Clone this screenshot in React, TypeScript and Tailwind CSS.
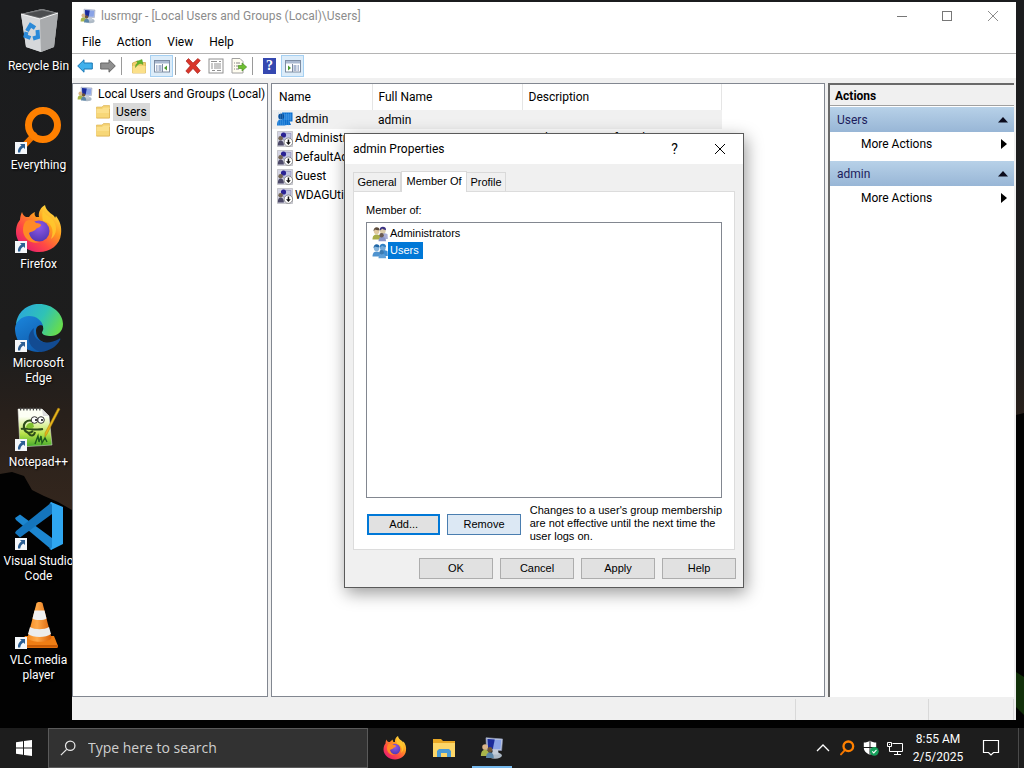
import type { ReactNode } from "react";

type IconProps = { className?: string };

function ComputerUsersIcon({ className }: IconProps) {
  return (
    <svg viewBox="0 0 16 16" className={className} aria-hidden="true">
      <path d="M4 1.2 L15 2 L14.4 9.6 L4.4 9.4Z" fill="#c9d2e4" stroke="#8c97b5" strokeWidth="0.5" />
      <path d="M5 2 L14.2 2.7 L13.7 8.8 L5.3 8.6Z" fill="#8aa3e6" />
      <path d="M5 2 L9.8 2.4 L8.6 8.7 L5.3 8.6Z" fill="#1a2a9a" />
      <ellipse cx="10" cy="13" rx="4.6" ry="2.2" fill="#aebac6" />
      <path d="M8.5 9.4h3.5l.5 3h-4.5z" fill="#c3ccd8" />
      <circle cx="3.4" cy="7.4" r="1.9" fill="#d9b489" />
      <path d="M0.6 13.4c0-2.8 1-4.2 2.8-4.2s2.8 1.4 2.8 4.2z" fill="#a9b64a" />
      <circle cx="6.6" cy="9" r="1.7" fill="#705536" />
      <path d="M4 14.6c0-2.4 1-3.8 2.6-3.8s2.6 1.4 2.6 3.8z" fill="#5b86a8" />
    </svg>
  );
}

function UserIcon({ className, disabled }: IconProps & { disabled?: boolean }) {
  return (
    <svg viewBox="0 0 16 16" className={className} aria-hidden="true">
      {disabled ? (
        <>
          <rect x="0.5" y="0.5" width="15" height="15" fill="#d4d4e4" stroke="#777" strokeWidth="0.6" strokeDasharray="1 1" />
          <path d="M5.5 2 L14 2.5 L13.5 9 L6 9Z" fill="#c0c4e2" stroke="#8385b0" strokeWidth="0.6" />
          <circle cx="6.5" cy="4" r="2.6" fill="#2a2294" />
          <circle cx="3.6" cy="7.2" r="2.3" fill="#756653" />
          <path d="M0.8 14.5c0-3.4 1-5 2.9-5s3.2 1.6 3.2 5z" fill="#4c4968" />
          <circle cx="11.4" cy="11.2" r="4.2" fill="#fff" stroke="#555" strokeWidth="0.6" />
          <path d="M10.7 8.4h1.5v2.8h1.6l-2.4 2.8L9 11.2h1.7z" fill="#111" />
        </>
      ) : (
        <>
          <path d="M5 0.500h10.500v9H12.500l1.500 3.500H7L5 10z" fill="#0b6fcf" />
          <path d="M6.500 2h8v6h-8z" fill="#2583dc" />
          <circle cx="4.200" cy="4.500" r="3" fill="#0a4f9b" />
          <path d="M0 13.500c0-4.300 1.200-6 4-6s4.500 1.800 4.500 6z" fill="#1979d4" />
          <path d="M1 1h14M1 3h14M1 5h14M1 7h14M1 9h14M1 11h12M1 13h11" stroke="#7fbdf2" strokeWidth="0.5" strokeDasharray="1 1" />
        </>
      )}
    </svg>
  );
}

function GroupIcon({ className, selected }: IconProps & { selected?: boolean }) {
  return (
    <svg viewBox="0 0 16 16" className={className} aria-hidden="true">
      <path d="M8 8c1-1.500 6-1.500 7.500.5l.3 4.500H9z" fill={selected ? "#3f8ed2" : "#a9aed6"} />
      <circle cx="10.800" cy="4.800" r="2.900" fill={selected ? "#74a9d8" : "#dccba9"} />
      <path d="M7.600 4.600c0-3 1.600-3.800 3.300-3.800s3.300 1 3.100 3.400c-2-.4-3-1-4-1.600-.4 1-1.300 1.700-2.400 2z" fill={selected ? "#2f7fc4" : "#3a3182"} />
      <circle cx="4.600" cy="5.400" r="2.700" fill={selected ? "#86b4dc" : "#e0c9a0"} />
      <path d="M1.500 5.200c0-2.600 1.500-3.900 3.100-3.900 1.900 0 3 1.200 2.900 3-2.200 0-3.800-.3-4.600-.8-.3.800-.8 1.300-1.400 1.700z" fill={selected ? "#2166a5" : "#5b4a3a"} />
      <path d="M0.500 13.500c0-3.600 1.600-5 4.100-5s4.300 1.400 4.300 5z" fill={selected ? "#4f93cf" : "#a9ad48"} />
      <path d="M6.500 15.200c0-3.200 1.500-4.500 3.600-4.500s4 1.300 4 4.500z" fill={selected ? "#5d9fd8" : "#8a94c8"} />
      <circle cx="9.600" cy="9.300" r="2.200" fill={selected ? "#3c7bb2" : "#6b5a52"} />
    </svg>
  );
}

function FolderIcon({ className }: IconProps) {
  return (
    <svg viewBox="0 0 16 16" className={className} aria-hidden="true">
      <path d="M1.500 3h5.500l1.500-1.500h6v12.500h-13z" fill="#f3d071" stroke="#dcb24d" strokeWidth="0.6" />
      <path d="M1.500 5h5.500l1.500-1.500h6V14h-13z" fill="#fbe08c" />
      <path d="M1.500 9h13v5h-13z" fill="#f5d36f" opacity="0.7" />
      <path d="M1.500 14h13V5" fill="none" stroke="#d8aa44" strokeWidth="0.6" />
    </svg>
  );
}

function RecycleBinIcon() {
  return (
    <svg viewBox="0 0 48 48" className="size-12" aria-hidden="true">
      <path d="M6 7 L27 2 L43 6 L39 40 L26 45 L11 40Z" fill="#c9cbcd" />
      <path d="M6 7 L27 2 L43 6 L25 12Z" fill="#77797b" />
      <path d="M10 7 L27 3.500 L39 6 L25 10.500Z" fill="#4b4d4f" />
      <path d="M6 7 L25 12 L26 45 L11 40Z" fill="#d6d8da" />
      <path d="M25 12 L43 6 L39 40 L26 45Z" fill="#a9abad" />
      <path d="M6 7 L25 12 L43 6" fill="none" stroke="#f2f2f2" strokeWidth="1" />
      <g fill="none" stroke="#2b8ad8" strokeWidth="4">
        <path d="M12 24l3.500-6 4.500 3" />
        <path d="M22.500 23l.5 7-5 1.500" />
        <path d="M15.500 31l-5-2 1-4" />
      </g>
    </svg>
  );
}

function EverythingIcon({ className }: IconProps) {
  return (
    <svg viewBox="0 0 48 48" className={className} aria-hidden="true">
      <path d="M19 29 L6 43" stroke="#f07400" strokeWidth="6" strokeLinecap="round" />
      <circle cx="28" cy="19" r="14.500" fill="none" stroke="#ff8000" strokeWidth="7" />
    </svg>
  );
}

function FirefoxIcon({ className }: IconProps) {
  return (
    <svg viewBox="0 0 48 48" className={className} aria-hidden="true">
      <defs>
        <linearGradient id="fxBody" x1="0.850" y1="0.100" x2="0.200" y2="0.900">
          <stop offset="0" stopColor="#ffe141" />
          <stop offset="0.350" stopColor="#ff9a1f" />
          <stop offset="0.700" stopColor="#ff4a44" />
          <stop offset="1" stopColor="#e9226a" />
        </linearGradient>
        <radialGradient id="fxGlobe" cx="0.500" cy="0.300" r="0.800">
          <stop offset="0" stopColor="#9059e8" />
          <stop offset="1" stopColor="#4c34ad" />
        </radialGradient>
      </defs>
      <path
        d="M30 0c1 5 4 7 8 10 1 1 2 2 2 3l1-2c4 5 6 11 5 18-1 11-11 18-22 18S1 39 1 27c0-6 2-10 4-12 0-3 1-6 2-8 1 3 2 4 4 5l3 0c2-3 4-4 6-5-1 2 0 4 1 5l3 0c-1-5 2-10 6-12z"
        fill="url(#fxBody)"
      />
      <circle cx="24" cy="26" r="10.500" fill="url(#fxGlobe)" />
      <path d="M11 16c4-2 8-1 10 2 3 0 5 1 5 2 0 2-4 3-5 4-2 3-5 2-7 4 1 5 5 9 11 9-9 3-17-4-17-12 0-4 1-7 3-9z" fill="#ff8a25" />
      <path d="M28 16c8 1 12 9 8 18 6-4 7-14 1-20-3-3-8-5-9-9-1 4-1 8 0 11z" fill="#ffc92e" opacity="0.850" />
    </svg>
  );
}

function EdgeIcon() {
  return (
    <svg viewBox="0 0 48 48" className="size-12" aria-hidden="true">
      <defs>
        <linearGradient id="edgeTop" x1="0" y1="0.200" x2="1" y2="0.600">
          <stop offset="0" stopColor="#2aa6de" />
          <stop offset="0.550" stopColor="#2fc2b6" />
          <stop offset="1" stopColor="#66dc4e" />
        </linearGradient>
        <linearGradient id="edgeLeft" x1="0" y1="0" x2="0.600" y2="1">
          <stop offset="0" stopColor="#1b86dc" />
          <stop offset="1" stopColor="#0f5aab" />
        </linearGradient>
      </defs>
      <path d="M1 21C2 8 12 0 24 0c14 0 24 10 24 20 0 8-6 12-12 12-5 0-9-1-9-3s2-3 1-6c-1-5-6-9-13-9C8 14 3 17 1 21z" fill="url(#edgeTop)" />
      <path d="M0 24c1-7 7-12 14-12 8 0 13 5 14 10-3-2-7 0-7 5 0 8 6 12 15 13-4 5-9 8-13 8C8 47 0 37 0 24z" fill="url(#edgeLeft)" />
      <path d="M19 24c-3 12 11 19 25 11 1-1 2 0 1 1-3 6-10 11-19 12-12-3-17-16-7-24z" fill="#124b92" />
      <path d="M28 22c0 3-2 5-1 7 1 3 8 5 14 3-4 5-16 5-18-4-1-4 2-8 5-6z" fill="#1a1b1d" />
    </svg>
  );
}

function NotepadIcon() {
  return (
    <svg viewBox="0 0 48 48" className="size-12" aria-hidden="true">
      <defs>
        <linearGradient id="nppPage" x1="0" y1="0" x2="0" y2="1">
          <stop offset="0.200" stopColor="#fdfff4" />
          <stop offset="0.650" stopColor="#b9e34a" />
          <stop offset="1" stopColor="#3fa82a" />
        </linearGradient>
      </defs>
      <path d="M3 6h24l7 7 3 29-32 2z" fill="url(#nppPage)" stroke="#e6e6e6" strokeWidth="0.500" />
      <path d="M27 6l1 7h6z" fill="#dcdcdc" />
      <path d="M5 6h22" stroke="#444" strokeWidth="3" strokeDasharray="1.200 2" />
      <path d="M18 18c-7-2-10 3-9 7 1 5 6 6 9 3M6 26c5-2 12 2 22 0M13 30c3 4 6 3 7-1" fill="none" stroke="#2d4d1a" strokeWidth="2" />
      <path d="M11 24c1-4 4-5 7-4l1 4c-3 2-6 2-8 0z" fill="#7fc12f" />
      <circle cx="19.500" cy="17" r="3.300" fill="#fff" stroke="#333" />
      <circle cx="26" cy="17" r="3.300" fill="#fff" stroke="#333" />
      <circle cx="21" cy="17" r="1" />
      <circle cx="27" cy="17" r="1" />
      <path d="M20 41l3-8 1 6 2-6 1 7 3-5 2 4" fill="none" stroke="#1d5b1d" strokeWidth="1.400" />
      <path d="M45 6l-13 25-2 3 0-4L43 5z" fill="#e5b51c" stroke="#a9780f" strokeWidth="0.500" />
    </svg>
  );
}

function VsCodeIcon() {
  return (
    <svg viewBox="0 0 48 48" className="size-12" aria-hidden="true">
      <path d="M0 16l5-3.500L37 36v12L1 18z" fill="#1c86d0" />
      <path d="M0 31l5 4.500L37 12V0L1 29z" fill="#1475bd" />
      <path d="M36 0l12 5v37l-12 6-2-2c2 1 3 0 3-2V4c0-2-1-3-3-2z" fill="#2fa6f0" />
    </svg>
  );
}

function VlcIcon() {
  return (
    <svg viewBox="0 0 48 48" className="size-12" aria-hidden="true">
      <defs>
        <linearGradient id="vlcCone" x1="0" x2="1">
          <stop offset="0" stopColor="#f58a1f" />
          <stop offset="0.400" stopColor="#ffa94a" />
          <stop offset="1" stopColor="#d95f06" />
        </linearGradient>
      </defs>
      <path d="M10 35h29l4 10-1 2H5l0-3z" fill="#ee7d14" />
      <path d="M5 44h38v2.500H5z" fill="#c95c05" />
      <path d="M21.500 2c1-1.500 5-1.500 6 0l9 35c-3 5-21 5-24 0z" fill="url(#vlcCone)" />
      <path d="M19.500 9.500h10l2 8c-3 2-11 2-14 0z" fill="#f1f1f1" />
      <path d="M15 26c5 3 14 3 19 0l2 7c-5 4-18 4-23 0z" fill="#ececec" />
    </svg>
  );
}

function ShortcutArrow() {
  return (
    <svg viewBox="0 0 12 12" className="absolute bottom-0 left-0 size-3" aria-hidden="true">
      <path d="M0 0h12v12H0z" fill="#f4f7fa" />
      <path d="M5 2h5v5L8.300 5.400C6.500 6.500 5.500 8 5.200 10.500H3C2.600 7.600 4 5 6.500 3.600z" fill="#2c5f94" />
    </svg>
  );
}

function ArrowIcon({ flip, light, dark }: { flip?: boolean; light: string; dark: string }) {
  return (
    <svg viewBox="0 0 16 16" className={flip ? "size-4 -scale-x-100" : "size-4"} aria-hidden="true">
      <path d="M0.700 8 L7 1.800V5h8.300v6H7v3.200z" fill={light} stroke={dark} strokeWidth="1" />
    </svg>
  );
}

function UpFolderIcon() {
  return (
    <svg viewBox="0 0 16 16" className="size-4" aria-hidden="true">
      <path d="M1.500 5l5-2 2 1.500h6V15h-13z" fill="#f1d06b" stroke="#c9a23e" strokeWidth="0.700" />
      <path d="M1.500 8h13V15h-13z" fill="#fbe08a" />
      <path d="M4.500 9.500c0-3 1-4 2.500-4.500L5.500 3.500 11 1.500l1 5-2-1c-2 0-4 1.500-5.500 4z" fill="#5fb52c" stroke="#3f8a17" strokeWidth="0.400" />
    </svg>
  );
}

function PaneIcon({ right }: { right?: boolean }) {
  return (
    <svg viewBox="0 0 16 16" className={right ? "size-4 -scale-x-100" : "size-4"} aria-hidden="true">
      <rect x="0.500" y="2.500" width="15" height="11.500" fill="#fff" stroke="#7c8ba1" />
      <path d="M1 3h14v2.500H1z" fill="#aab9d0" />
      <path d="M8.500 6v8" stroke="#7c8ba1" />
      <path d="M2 8h1.500M4.500 8h3M2 10h1.500M4.500 10h3M2 12h1.500M4.500 12h3" stroke="#5b74a4" />
      <path d="M13 7.500v5L10 10z" fill="#4b9b2f" />
    </svg>
  );
}

function DeleteIcon() {
  return (
    <svg viewBox="0 0 16 16" className="size-4" aria-hidden="true">
      <path d="M1 3l2.500-2.500L8 5l4.800-4.500L15.300 2.500 10.800 7.500l4.500 5.300-2.800 2.700L8 10.500l-4.700 5L.8 13 5.300 7.800z" fill="#d9352a" stroke="#9e1b14" strokeWidth="0.600" />
    </svg>
  );
}

function PropertiesIcon() {
  return (
    <svg viewBox="0 0 16 16" className="size-4" aria-hidden="true">
      <rect x="1" y="1" width="14" height="14" fill="#fff" stroke="#909090" />
      <path d="M3 3.500h6M3 6h2M6 6h7M3 8h2M6 8h7M3 10h2M6 10h7M4 12.500h3M9 12.500h4M11 3.500h2" stroke="#909090" />
    </svg>
  );
}

function ExportIcon() {
  return (
    <svg viewBox="0 0 16 16" className="size-4" aria-hidden="true">
      <path d="M1 0.500h8L12 3.500V15H1z" fill="#fffdf0" stroke="#a0a0a0" />
      <path d="M3 5h1M5 5h4M3 8h1M5 8h3M3 11h1M5 11h3" stroke="#888" />
      <path d="M7.500 7.500h3.500V5L15.700 9 11 13v-2.500H7.500z" fill="#6fbf33" stroke="#3f8a17" strokeWidth="0.600" />
    </svg>
  );
}

function HelpIcon() {
  return (
    <span className="flex h-4 w-[13px] items-center justify-center bg-[#3548b0] font-['Liberation_Serif',serif] text-sm font-bold text-white">
      ?
    </span>
  );
}

function CloseGlyph({ className }: IconProps) {
  return (
    <svg viewBox="0 0 12 12" className={className} fill="none" stroke="currentColor" aria-hidden="true">
      <path d="M1 1l10 10M11 1L1 11" />
    </svg>
  );
}

const SHORTCUTS: { label: string; icon: ReactNode; link?: boolean }[] = [
  { label: "Recycle Bin", icon: <RecycleBinIcon /> },
  { label: "Everything", icon: <EverythingIcon className="size-12" />, link: true },
  { label: "Firefox", icon: <FirefoxIcon className="size-12" />, link: true },
  { label: "Microsoft\nEdge", icon: <EdgeIcon />, link: true },
  { label: "Notepad++", icon: <NotepadIcon />, link: true },
  { label: "Visual Studio\nCode", icon: <VsCodeIcon />, link: true },
  { label: "VLC media\nplayer", icon: <VlcIcon />, link: true },
];

const USERS = [
  { name: "admin", fullName: "admin", description: "", disabled: false },
  { name: "Administrator", fullName: "", description: "Built-in account for administering", disabled: true },
  { name: "DefaultAccount", fullName: "", description: "", disabled: true },
  { name: "Guest", fullName: "", description: "", disabled: true },
  { name: "WDAGUtility", fullName: "", description: "", disabled: true },
];

function Wallpaper() {
  return (
    <svg viewBox="0 0 1024 768" preserveAspectRatio="none" className="absolute inset-0 size-full" aria-hidden="true">
      <defs>
        <linearGradient id="sky" x1="0" y1="0" x2="0" y2="1">
          <stop offset="0" stopColor="#1b1c1e" />
          <stop offset="0.450" stopColor="#1d1d1d" />
          <stop offset="0.540" stopColor="#28201b" />
          <stop offset="0.660" stopColor="#33261d" />
        </linearGradient>
      </defs>
      <path d="M0 0h1024v768H0z" fill="url(#sky)" />
      <path d="M0 474l12-2 12 4 8 14 12 6 14 6 14 8L900 430l116-15 8-2v355H0z" fill="#020202" />
      <path d="M1016 672l8 5v38l-8-8z" fill="#12300a" />
    </svg>
  );
}

function DesktopIcons() {
  return (
    <nav className="w-[72px] shrink-0 overflow-hidden pt-[7px]">
      {SHORTCUTS.map((item) => (
        <button key={item.label} type="button" className="flex h-[99px] w-[77px] flex-col items-center text-white">
          <span className="relative mb-1 block size-12">
            {item.icon}
            {item.link && <ShortcutArrow />}
          </span>
          <span className="text-xs leading-[15px] whitespace-pre [text-shadow:1px_1px_2px_#000]">{item.label}</span>
        </button>
      ))}
    </nav>
  );
}

function ToolButton({ label, active, children }: { label: string; active?: boolean; children: ReactNode }) {
  return (
    <button
      type="button"
      aria-label={label}
      className={`flex h-[22px] w-[23px] items-center justify-center border ${
        active ? "border-[#a5d0f2] bg-[#dcecf9]" : "border-transparent"
      }`}
    >
      {children}
    </button>
  );
}

function ToolSeparator() {
  return <span className="mr-[5px] ml-0.5 h-[18px] w-px bg-[#9a9a9a]" />;
}

function Toolbar() {
  return (
    <div className="flex h-[24px] items-center bg-white pl-px">
      <ToolButton label="Back">
        <ArrowIcon light="#3fb0ec" dark="#1b78b5" />
      </ToolButton>
      <ToolButton label="Forward">
        <ArrowIcon flip light="#8f8f8f" dark="#666666" />
      </ToolButton>
      <ToolSeparator />
      <ToolButton label="Up one level">
        <UpFolderIcon />
      </ToolButton>
      <ToolButton label="Show console tree" active>
        <PaneIcon />
      </ToolButton>
      <ToolSeparator />
      <ToolButton label="Delete">
        <DeleteIcon />
      </ToolButton>
      <ToolButton label="Properties">
        <PropertiesIcon />
      </ToolButton>
      <ToolButton label="Export list">
        <ExportIcon />
      </ToolButton>
      <ToolSeparator />
      <ToolButton label="Help">
        <HelpIcon />
      </ToolButton>
      <ToolButton label="Show action pane" active>
        <PaneIcon right />
      </ToolButton>
    </div>
  );
}

function ConsoleTree() {
  return (
    <div className="w-[196px] shrink-0 border border-[#828790] bg-white pt-px leading-[18px] whitespace-nowrap">
      <div className="flex h-[18px] items-center gap-[5px] pl-1">
        <ComputerUsersIcon className="size-4 shrink-0" />
        <span>Local Users and Groups (Local)</span>
      </div>
      <ul className="pl-[22px]">
        <li className="flex h-[18px] items-center gap-0.5">
          <FolderIcon className="size-4" />
          <button type="button" className="bg-[#d9d9d9] px-[3px]">Users</button>
        </li>
        <li className="flex h-[18px] items-center gap-0.5">
          <FolderIcon className="size-4" />
          <button type="button" className="px-[3px]">Groups</button>
        </li>
      </ul>
    </div>
  );
}

function UserTable() {
  return (
    <div className="min-w-0 flex-1 border border-[#828790] bg-white">
      <table className="w-[450px] table-fixed border-collapse text-left">
        <thead>
          <tr className="h-[26px]">
            <th className="w-[100px] border-r border-[#e5e5e5] pl-[7px] font-normal">Name</th>
            <th className="w-[150px] border-r border-[#e5e5e5] pl-1.5 font-normal">Full Name</th>
            <th className="border-r border-[#e5e5e5] pl-1.5 font-normal">Description</th>
          </tr>
        </thead>
        <tbody>
          {USERS.map((user) => (
            <tr key={user.name} className={user.disabled ? "h-[19px]" : "h-[19px] bg-[#f0f0f0]"}>
              <td className="pl-[5px]">
                <span className="flex items-center gap-0.5 leading-[19px]">
                  <UserIcon className="size-4 shrink-0" disabled={user.disabled} />
                  {user.name}
                </span>
              </td>
              <td className="pl-1.5">{user.fullName}</td>
              <td className="truncate pl-1.5 leading-[19px]">{user.description}</td>
            </tr>
          ))}
        </tbody>
      </table>
    </div>
  );
}

function ActionGroup({ title }: { title: string }) {
  return (
    <section className="h-[54px]">
      <button
        type="button"
        className="flex h-[25px] w-full items-center justify-between bg-linear-to-b from-[#b7d1e8] to-[#98b6d6] pr-1.5 pl-[7px] text-[#1c1c5c]"
      >
        {title}
        <svg viewBox="0 0 10 6" className="h-1.5 w-2.5" aria-hidden="true">
          <path d="M0 5.500L5 0l5 5.500z" fill="#0b0b1c" />
        </svg>
      </button>
      <button type="button" className="flex h-6 w-full items-center justify-between pr-[7px] pl-[31px]">
        More Actions
        <svg viewBox="0 0 6 10" className="h-2.5 w-1.5" aria-hidden="true">
          <path d="M0 0l6 5-6 5z" fill="#000" />
        </svg>
      </button>
    </section>
  );
}

function ActionsPane() {
  return (
    <aside className="mr-0.5 w-[186px] shrink-0 border-t-2 border-l-2 border-[#696969] bg-white">
      <h2 className="mb-px h-[21px] border-b border-[#a0a0a0] bg-[#f0f0f0] pl-[5px] leading-[22px] font-bold">Actions</h2>
      <ActionGroup title="Users" />
      <ActionGroup title="admin" />
    </aside>
  );
}

function DialogButton({ children }: { children: ReactNode }) {
  return (
    <button type="button" className="h-[21px] w-[74px] border border-[#adadad] bg-[#e1e1e1]">
      {children}
    </button>
  );
}

function PropertiesDialog() {
  return (
    <div
      role="dialog"
      aria-label="admin Properties"
      className="absolute top-[133px] left-[344px] w-[400px] border border-[#5a5a5a] bg-[#f0f0f0] pb-2 font-['Liberation_Sans',Arial,sans-serif] text-[11px] leading-[13px] shadow-[2px_5px_16px_rgba(0,0,0,0.4)]"
    >
      <div className="flex h-[30px] items-center bg-white pl-2 font-[Roboto,'Open_Sans',sans-serif] text-xs">
        <span className="flex-1">admin Properties</span>
        <button type="button" aria-label="Help" className="w-[45px] text-sm">?</button>
        <button type="button" aria-label="Close" className="flex h-full w-[46px] items-center justify-center">
          <CloseGlyph className="size-3" />
        </button>
      </div>
      <div className="px-2 pt-[7px]">
        <div role="tablist" className="flex items-end">
          <button type="button" role="tab" className="h-[19px] w-12 border border-b-0 border-[#d9d9d9]">General</button>
          <button type="button" role="tab" aria-selected="true" className="-mb-px h-[21px] w-[66px] border border-b-0 border-[#d9d9d9] bg-white pb-0.5">
            Member Of
          </button>
          <button type="button" role="tab" className="h-[19px] w-[39px] border border-b-0 border-l-0 border-[#d9d9d9]">Profile</button>
        </div>
        <div role="tabpanel" className="border border-[#dcdcdc] bg-white px-3 pt-3 pb-1.5">
          <p id="member-of" className="mb-[5px]">Member of:</p>
          <ul role="listbox" aria-labelledby="member-of" className="h-[276px] border border-[#828790] pt-0.5 pl-[5px]">
            <li role="option" aria-selected="false" className="flex h-[17px] items-center">
              <GroupIcon className="size-4" />
              <span className="px-0.5">Administrators</span>
            </li>
            <li role="option" aria-selected="true" className="flex h-[17px] items-center">
              <GroupIcon className="size-4" selected />
              <span className="bg-[#0078d7] pr-1 pl-0.5 leading-[17px] text-white">Users</span>
            </li>
          </ul>
          <div className="flex pt-1.5">
            <button type="button" className="mt-2.5 mr-[7px] ml-px h-[21px] w-[74px] border-2 border-[#0078d7] bg-[#e1e1e1]">
              Add...
            </button>
            <button type="button" className="mt-2.5 mr-[9px] h-[21px] w-[74px] border border-[#4a7eb0] bg-[#dce8f4]">
              Remove
            </button>
            <p className="flex-1 whitespace-nowrap">
              Changes to a user's group membership
              <br />
              are not effective until the next time the
              <br />
              user logs on.
            </p>
          </div>
        </div>
      </div>
      <div className="flex justify-end gap-[7px] pt-2 pr-[7px]">
        <DialogButton>OK</DialogButton>
        <DialogButton>Cancel</DialogButton>
        <DialogButton>Apply</DialogButton>
        <DialogButton>Help</DialogButton>
      </div>
    </div>
  );
}

function ConsoleWindow() {
  return (
    <main className="mt-0.5 mr-2 mb-2 flex min-w-0 flex-1 flex-col bg-[#f0f0f0] text-xs">
      <header className="flex h-7 items-center bg-white pl-2 text-[#8c8c8c]">
        <ComputerUsersIcon className="mr-[5px] size-4" />
        <h1 className="flex-1">lusrmgr - [Local Users and Groups (Local)\Users]</h1>
        <button type="button" aria-label="Minimize" className="flex h-full w-[45px] items-center justify-center">
          <span className="h-px w-2.5 bg-[#777]" />
        </button>
        <button type="button" aria-label="Maximize" className="flex h-full w-[46px] items-center justify-center">
          <span className="size-2.5 border border-[#777]" />
        </button>
        <button type="button" aria-label="Close" className="flex h-full w-[46px] items-center justify-center">
          <CloseGlyph className="size-3" />
        </button>
      </header>
      <div className="flex h-6 items-center gap-4 border-b border-[#b4b4b4] bg-white pl-2.5">
        <button type="button">File</button>
        <button type="button">Action</button>
        <button type="button">View</button>
        <button type="button">Help</button>
      </div>
      <Toolbar />
      <div className="flex min-h-0 flex-1 gap-[3px] pt-[5px]">
        <ConsoleTree />
        <UserTable />
        <ActionsPane />
      </div>
      <footer className="flex h-[23px] justify-end pt-0.5 pr-0.5">
        <span className="w-[133px] border-l border-[#d9d9d9]" />
        <span className="w-[86px] border-x border-[#d9d9d9]" />
      </footer>
    </main>
  );
}

function Taskbar() {
  return (
    <footer className="relative flex h-10 shrink-0 items-stretch bg-[#1d1d1d] text-white">
      <button type="button" aria-label="Start" className="flex w-12 items-center justify-center">
        <svg viewBox="0 0 16 16" className="size-4" fill="#fff" aria-hidden="true">
          <path d="M0 2.200l7-1V7.600H0zM8 1l8-1v7.600H8zM0 8.500h7v6.300l-7-1zM8 8.500h8V16l-8-1.100z" />
        </svg>
      </button>
      <label className="flex w-[320px] items-center gap-3 border border-[#5a5a5a] bg-[#323232] pl-[11px]">
        <svg viewBox="0 0 18 18" className="size-4" fill="none" stroke="#e8e8e8" strokeWidth="1.400" aria-hidden="true">
          <circle cx="11.500" cy="6.500" r="5.300" />
          <path d="M7.500 10.500L1 17" />
        </svg>
        <input
          type="text"
          aria-label="Search"
          placeholder="Type here to search"
          className="min-w-0 flex-1 bg-transparent font-['Open_Sans',sans-serif] text-sm outline-none placeholder:text-[#cfcfcf]"
        />
      </label>
      <button type="button" aria-label="Firefox" className="ml-[3px] flex w-12 items-center justify-center">
        <FirefoxIcon className="size-6" />
      </button>
      <button type="button" aria-label="File Explorer" className="flex w-[49px] items-center justify-center">
        <svg viewBox="0 0 24 24" className="size-6" aria-hidden="true">
          <path d="M1 3h8l2 2h12v15H1z" fill="#e9a825" />
          <path d="M1 7h22v14H1z" fill="#fcd668" />
          <path d="M5 21v-6l2-2h10l2 2v6h-4v-4H9v4z" fill="#4a9ad4" />
        </svg>
      </button>
      <button type="button" aria-label="Local Users and Groups" className="flex w-12 flex-col items-center justify-end">
        <ComputerUsersIcon className="mb-1.5 size-6" />
        <span className="h-0.5 w-10 bg-[#76b9ed]" />
      </button>
      <div className="ml-auto flex items-center">
        <button type="button" aria-label="Show hidden icons" className="flex w-6 justify-center">
          <svg viewBox="0 0 14 8" className="h-2 w-3.5" fill="none" stroke="#fff" strokeWidth="1.300" aria-hidden="true">
            <path d="M1 7l6-6 6 6" />
          </svg>
        </button>
        <button type="button" aria-label="Everything" className="flex w-6 justify-center">
          <EverythingIcon className="size-4" />
        </button>
        <button type="button" aria-label="Windows Security" className="flex w-6 justify-center">
          <svg viewBox="0 0 16 16" className="size-4" aria-hidden="true">
            <path d="M7 0.500C5.500 2 3 2.500 0.800 2.600v4.900c0 3.500 2.700 5.700 6.200 7.500 3.500-1.800 6.200-4 6.200-7.500V2.600C11 2.500 8.500 2 7 .5z" fill="#fff" />
            <path d="M7 0v15M0 7.500h14" stroke="#1d1d1d" />
            <circle cx="11.300" cy="11.300" r="4.400" fill="#16a05b" />
            <path d="M9.200 11.400l1.600 1.500 2.700-3" fill="none" stroke="#fff" strokeWidth="1.100" />
          </svg>
        </button>
        <button type="button" aria-label="Network" className="flex w-6 justify-center">
          <svg viewBox="0 0 16 16" className="size-4" fill="none" stroke="#fff" aria-hidden="true">
            <path d="M5.500 3.500h10v8h-10M10.500 11.500v3M7 14.500h7M0.500 2.500h4v4h-4zM2.500 6.500v5h4M2 4.500h1" />
          </svg>
        </button>
        <div className="w-[62px] text-center text-xs leading-[18px]">
          <div>8:55 AM</div>
          <div>2/5/2025</div>
        </div>
        <button type="button" aria-label="Notifications" className="flex w-11 justify-center">
          <svg viewBox="0 0 18 18" className="size-[18px]" fill="none" stroke="#fff" strokeWidth="1.200" aria-hidden="true">
            <path d="M1.500 1.500h15v12h-5L9 16l-2.500-2.500h-5z" />
          </svg>
        </button>
        <span className="mr-[5px] ml-[5px] h-10 w-px bg-[#4a4a4a]" />
      </div>
    </footer>
  );
}

export default function App() {
  return (
    <div className="relative flex h-screen flex-col overflow-hidden bg-black font-[Roboto,'Open_Sans',sans-serif] text-black">
      <Wallpaper />
      <div className="relative flex min-h-0 flex-1">
        <DesktopIcons />
        <ConsoleWindow />
      </div>
      <Taskbar />
      <PropertiesDialog />
    </div>
  );
}
